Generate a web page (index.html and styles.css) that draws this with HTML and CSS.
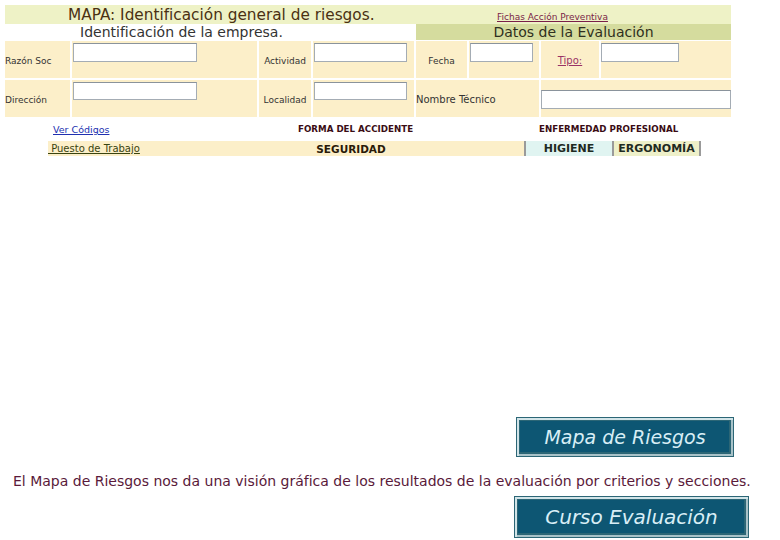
FILE: index.html
```html
<!DOCTYPE html>
<html lang="es">
<head>
    <meta charset="UTF-8">
    <title>MAPA: Identificación general de riesgos</title>
    <link rel="stylesheet" href="styles.css">
</head>
<body>
    <div class="page">
        <div class="head-bar">
            <span class="title">MAPA: Identificación general de riesgos.</span>
            <a class="fichas" href="#">Fichas Acción Preventiva</a>
        </div>
        <div class="sub-bar">
            <div class="sub-left">Identificación de la empresa.</div>
            <div class="sub-right">Datos de la Evaluación</div>
        </div>

        <div class="form-grid">
            <div class="cell label">Razón Soc</div>
            <div class="cell field"><input class="in-lg" type="text"></div>
            <div class="cell label center">Actividad</div>
            <div class="cell field"><input class="in-md" type="text"></div>
            <div class="cell label center">Fecha</div>
            <div class="cell field"><input class="in-sm" type="text"></div>
            <div class="cell label center"><a class="tipo" href="#">Tipo:</a></div>
            <div class="cell field flush"><input class="in-tipo" type="text"></div>

            <div class="cell label">Dirección</div>
            <div class="cell field"><input class="in-lg short" type="text"></div>
            <div class="cell label center">Localidad</div>
            <div class="cell field"><input class="in-md short" type="text"></div>
            <div class="cell label big span2">Nombre Técnico</div>
            <div class="cell field mid span2"><input class="in-wide" type="text"></div>
        </div>

        <div class="codes">
            <div class="codes-link"><a href="#">Ver Códigos</a></div>
            <div class="codes-head">FORMA DEL ACCIDENTE</div>
            <div class="codes-head">ENFERMEDAD PROFESIONAL</div>
        </div>

        <div class="tabs">
            <div class="tab-main">
                <a class="puesto" href="#">&nbsp;Puesto de Trabajo</a>
                <span class="tab-title">SEGURIDAD</span>
            </div>
            <div class="tab higiene">HIGIENE</div>
            <div class="tab ergo">ERGONOMÍA</div>
        </div>

        <div class="btn-row first">
            <a class="btn btn-mapa" href="#">Mapa de Riesgos</a>
        </div>
        <p class="intro">El Mapa de Riesgos nos da una visión gráfica de los resultados de la evaluación por criterios y secciones.</p>
        <div class="btn-row second">
            <a class="btn btn-curso" href="#">Curso Evaluación</a>
        </div>
    </div>
</body>
</html>
```

FILE: styles.css
```css
/* Page */
body {
    margin: 0;
    font-family: "DejaVu Sans", Verdana, sans-serif;
    background-color: #fff;
    color: #333;
}

.page {
    padding: 5px 0 0 5px;
}

/* Title bars */
.head-bar {
    width: 726px;
    height: 19px;
    display: flex;
    align-items: center;
    background-color: #eef2c6;
}

.title {
    width: 492px;
    padding-left: 63px;
    box-sizing: border-box;
    font-size: 15.3px;
    color: #4a3012;
}

.fichas {
    font-size: 9px;
    color: #7a1f48;
    margin-top: 5px;
}

.sub-bar {
    display: flex;
    height: 16px;
    width: 726px;
}

.sub-left {
    width: 408px;
    padding-left: 75px;
    box-sizing: border-box;
    font-size: 14px;
    line-height: 16px;
    color: #333;
}

.sub-right {
    flex: 1;
    margin-left: 3px;
    background-color: #d5dc9e;
    text-align: center;
    font-size: 14px;
    line-height: 16px;
    color: #2f2f20;
}

/* Form grid */
.form-grid {
    margin-top: 1px;
    width: 726px;
    display: grid;
    grid-template-columns: 65px 185px 52px 101px 51px 70px 58px 130px;
    grid-template-rows: 37px 37px;
    gap: 2px;
}

.cell {
    background-color: #fcefc9;
    display: flex;
    font-size: 9px;
    color: #333;
    white-space: nowrap;
}

.cell.label {
    align-items: center;
    padding-top: 2px;
}

.cell.big {
    font-size: 10px;
}

.cell.center {
    justify-content: center;
}

.cell.field {
    align-items: flex-start;
    padding: 2px 0 0 1px;
}

.cell.field.flush {
    padding-left: 0;
}

.cell.field.mid {
    align-items: center;
    padding: 1px 0 0 0;
}

.span2 {
    grid-column: span 2;
}

.form-grid input {
    box-sizing: border-box;
    height: 19px;
    padding: 0 2px;
    margin: 0;
    border: 1px solid #a4acb4;
    border-top-color: #8a939c;
    background-color: #fff;
}

.form-grid input.short {
    height: 18px;
}

.in-lg { width: 124px; }
.in-md { width: 93px; margin-left: 1px; }
.in-sm { width: 63px; margin-left: 1px; }
.in-tipo { width: 78px; }
.in-wide { width: 190px; }

.tipo {
    color: #993366;
    font-size: 10px;
}

/* Codes header */
.codes {
    display: flex;
    margin-top: 5px;
    height: 14px;
    align-items: center;
}

.codes-link {
    width: 295px;
    padding-left: 48px;
    box-sizing: border-box;
    font-size: 9.5px;
}

.codes-link a {
    color: #2030b0;
}

.codes-head {
    width: 243px;
    font-size: 8.7px;
    font-weight: bold;
    color: #3a0c14;
}

/* Tabs row */
.tabs {
    display: flex;
    margin: 5px 0 0 43px;
    height: 15px;
}

.tab-main {
    width: 476px;
    display: flex;
    align-items: center;
    background-color: #fcefc9;
}

.puesto {
    width: 230px;
    font-size: 10px;
    color: #3a4410;
}

.tab-title {
    width: 146px;
    text-align: center;
    font-size: 10.5px;
    font-weight: bold;
    color: #2a1a08;
}

.tab {
    border-left: 2px solid #9a9a9a;
    width: 86px;
    text-align: center;
    font-size: 11px;
    font-weight: bold;
    line-height: 15px;
    color: #1e2a22;
}

.higiene {
    background-color: #e0f4f1;
}

.ergo {
    background-color: #eef0c9;
    width: 85px;
    border-right: 2px solid #9a9a9a;
}

/* Buttons */
.btn-row {
    display: flex;
}

.btn-row.first {
    margin-top: 261px;
    padding-left: 511px;
}

.btn-row.second {
    margin-top: 7px;
    padding-left: 509px;
}

.btn {
    display: flex;
    align-items: center;
    justify-content: center;
    box-sizing: border-box;
    background-color: #0d5673;
    border: 1px solid #2c6676;
    box-shadow: inset 2px 2px 0 #d2e4e8, inset -2px -2px 0 #a8c2c8, inset 3px 3px 0 #2c6676, inset -4px -4px 0 #2c6676;
    color: #d8eef6;
    font-style: italic;
    text-decoration: none;
}

.btn-mapa {
    width: 218px;
    height: 40px;
    font-size: 19px;
}

.btn-curso {
    width: 235px;
    height: 42px;
    font-size: 20px;
}

.intro {
    margin: 16px 0 0 8px;
    font-size: 14px;
    line-height: 16px;
    color: #5a1a3a;
}
```
